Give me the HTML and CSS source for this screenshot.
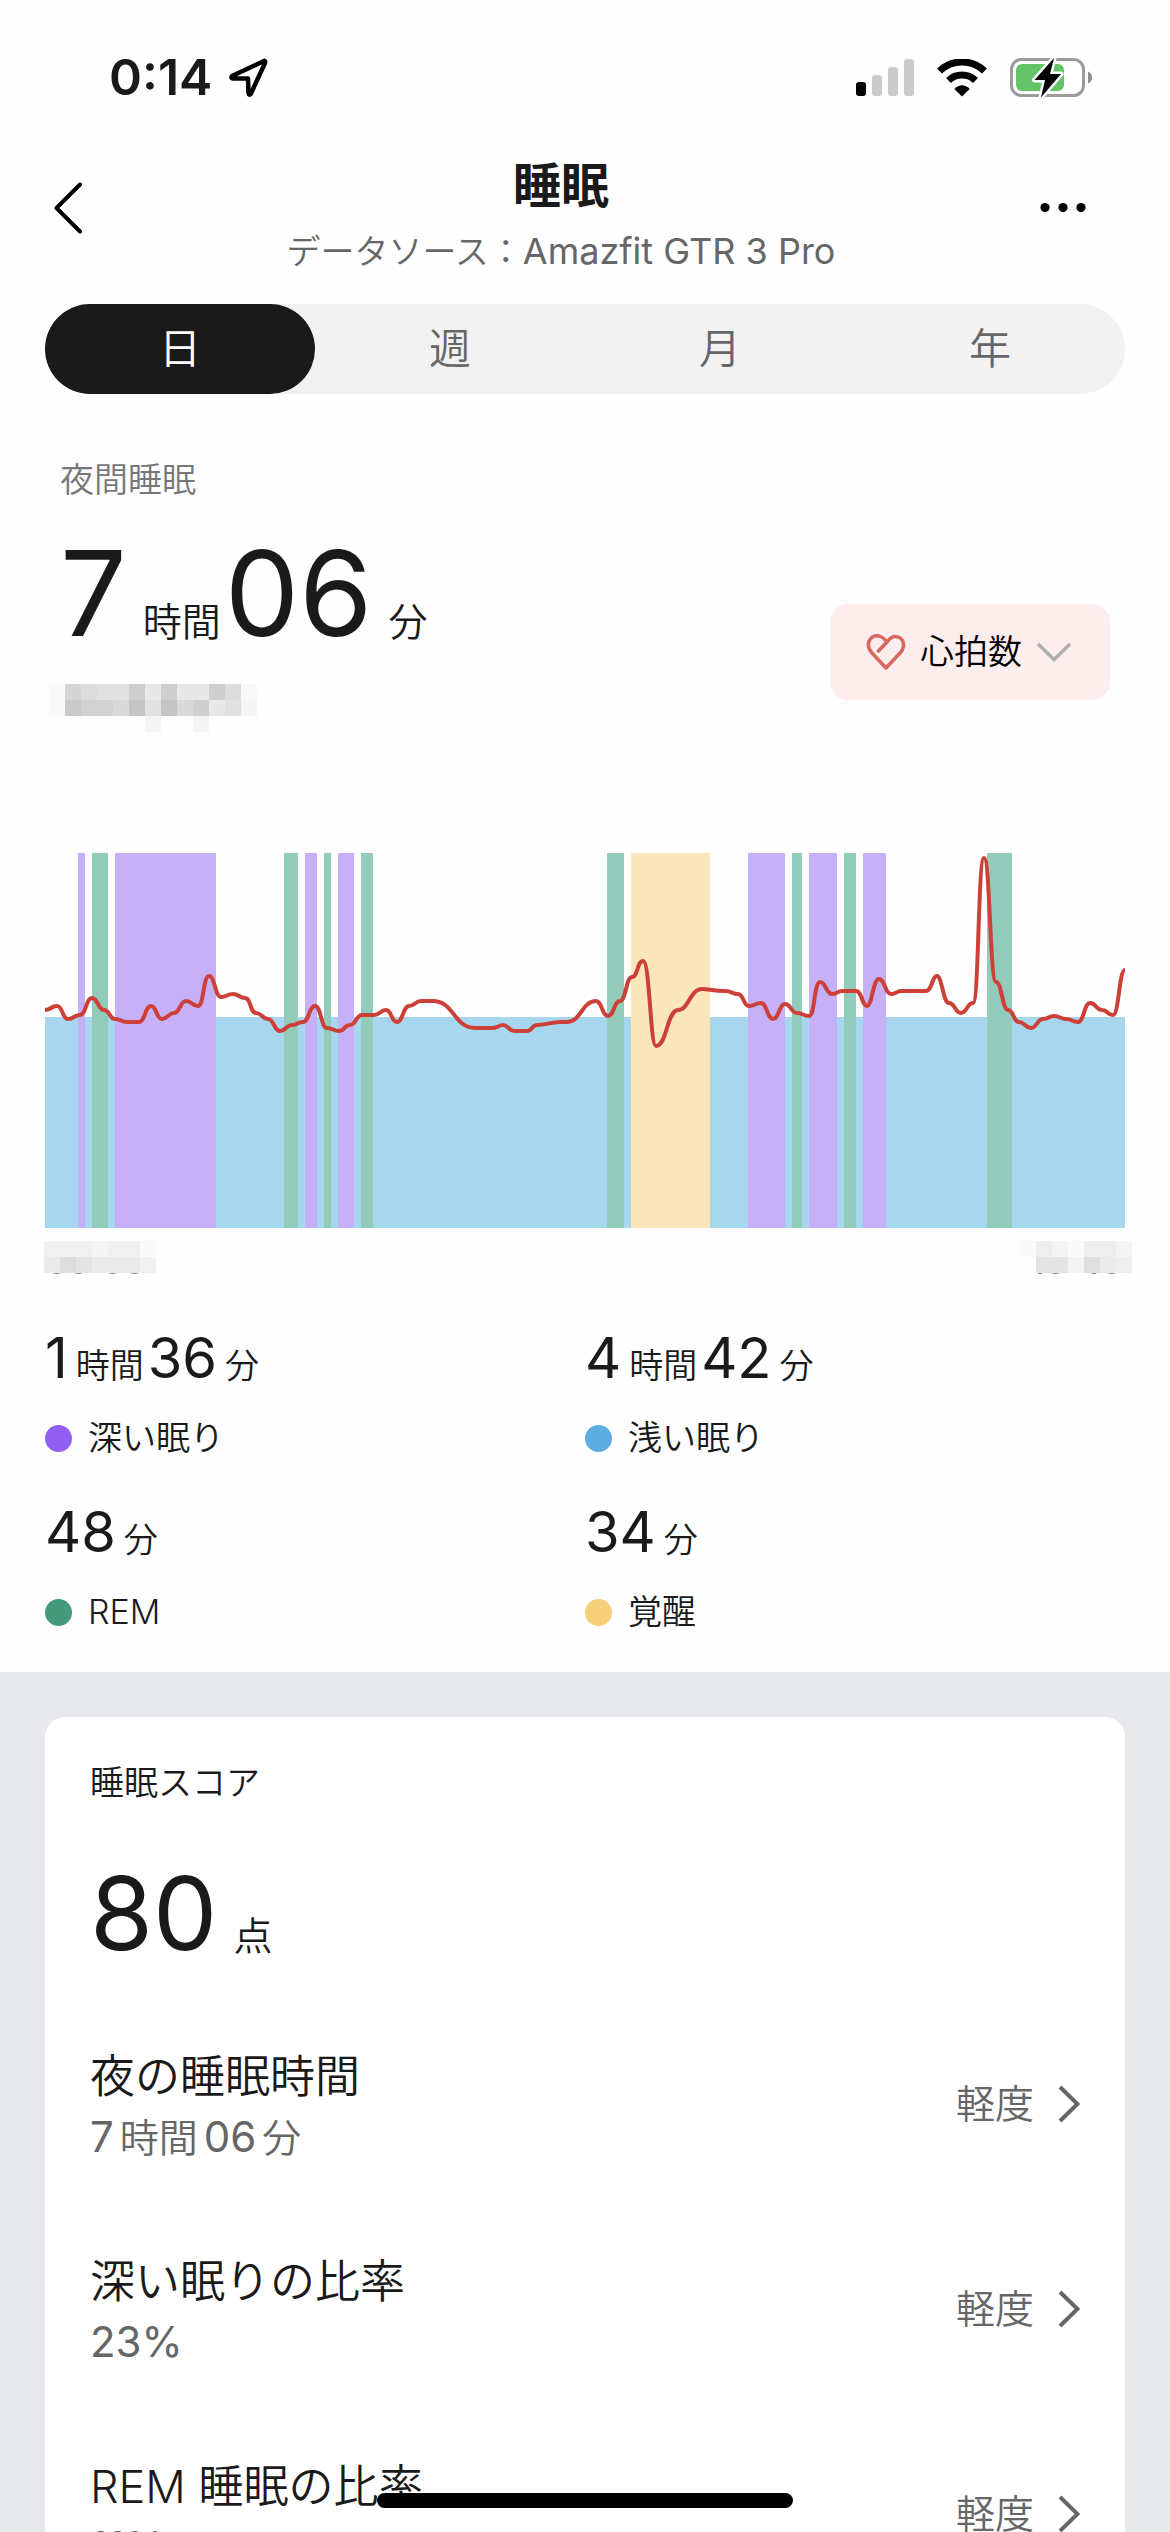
FILE: index.html
```html
<!DOCTYPE html>
<html lang="ja">
<head>
<meta charset="utf-8">
<meta name="viewport" content="width=device-width, initial-scale=1">
<title>睡眠</title>
<link rel="stylesheet" href="styles.css">
</head>
<body>
<div class="screen">
  <div class="status-bar">
    <div class="status-left">
      <span class="clock">0:14</span>
      <svg width="40" height="40" viewBox="0 0 40 40" aria-hidden="true">
        <path d="M36 3 L4 18 Q2.500 20 5 20.500 L20 20.500 L20.500 35 Q21 38 23 35.500 L37 5 Q37.500 2.500 36 3Z" fill="none" stroke="#000" stroke-width="4.500" stroke-linejoin="round"/>
      </svg>
    </div>
    <div class="status-right">
      <svg width="58" height="38" viewBox="0 0 58 38" aria-hidden="true">
        <rect x="0" y="23" width="10" height="14" rx="3" fill="#000"/>
        <rect x="16" y="16" width="10" height="21" rx="3" fill="#cacaca"/>
        <rect x="32" y="8" width="10" height="29" rx="3" fill="#cacaca"/>
        <rect x="48" y="0" width="10" height="37" rx="3" fill="#cacaca"/>
      </svg>
      <svg width="52" height="38" viewBox="0 0 52 38" aria-hidden="true">
        <path d="M3.500 12 A32.500 32.500 0 0 1 48.500 12" fill="none" stroke="#000" stroke-width="7"/>
        <path d="M12.500 21.500 A19.500 19.500 0 0 1 39.500 21.500" fill="none" stroke="#000" stroke-width="7"/>
        <path d="M26 37.500 L18.300 30 Q26 22.500 33.700 30 Z" fill="#000"/>
      </svg>
      <svg width="82" height="42" viewBox="0 0 82 42" aria-hidden="true">
        <rect x="1.500" y="2.500" width="72" height="36" rx="10" fill="#fff" stroke="#9b9b9b" stroke-width="3"/>
        <path d="M78 14.500 Q82 16 82 20.500 Q82 25 78 26.500Z" fill="#8c8c8c"/>
        <rect x="6" y="7" width="48" height="27" rx="6" fill="#62c466"/>
        <path d="M44 1 L24.500 23 H35 L31 40.500 L51 17 H40 Z" fill="#000" stroke="#fff" stroke-width="5" stroke-linejoin="round" paint-order="stroke"/>
      </svg>
    </div>
  </div>

  <header class="nav">
    <button class="nav-button" type="button" aria-label="戻る">
      <svg width="28" height="52" viewBox="0 0 28 52" aria-hidden="true"><path d="M26 2.500 L2.500 26 L26 49.500" fill="none" stroke="#000" stroke-width="4" stroke-linecap="round" stroke-linejoin="round"/></svg>
    </button>
    <div class="nav-title">
      <h1>睡眠</h1>
      <p><span class="kana">データソース：</span>Amazfit GTR 3 Pro</p>
    </div>
    <button class="nav-button" type="button" aria-label="その他">
      <svg width="46" height="10" viewBox="0 0 46 10" aria-hidden="true"><circle cx="5" cy="4.600" r="4.600"/><circle cx="23" cy="4.600" r="4.600"/><circle cx="41" cy="4.600" r="4.600"/></svg>
    </button>
  </header>

  <main>
    <div class="tabs" role="tablist">
      <button class="tab tab-active" role="tab" aria-selected="true" type="button">日</button>
      <button class="tab" role="tab" aria-selected="false" type="button">週</button>
      <button class="tab" role="tab" aria-selected="false" type="button">月</button>
      <button class="tab" role="tab" aria-selected="false" type="button">年</button>
    </div>

    <section class="summary">
      <div>
        <h2 class="summary-label">夜間睡眠</h2>
        <p class="duration"><span>7</span><span class="unit unit-wide">時間</span><span>06</span><span class="unit">分</span></p>
        <svg class="masked" width="208" height="48" viewBox="0 0 13 3" shape-rendering="crispEdges" aria-hidden="true">
          <path fill="#fafafa" d="M0 0h1v2h-1z"/><path fill="#d5d5d5" d="M1 0h1v1h-1z"/><path fill="#dcdcdc" d="M2 0h1v1h-1zM11 0h1v1h-1z"/><path fill="#e1e1e1" d="M3 0h2v1h-2zM11 1h1v1h-1zM6 1h1v1h-1z"/><path fill="#cfcfcf" d="M5 0h1v1h-1zM7 0h1v1h-1zM10 0h1v1h-1zM9 1h1v1h-1z"/><path fill="#e8e8e8" d="M6 0h1v1h-1zM8 0h2v1h-2zM10 1h1v1h-1z"/><path fill="#f8f8f8" d="M12 0h1v1h-1z"/><path fill="#cacaca" d="M1 1h1v1h-1z"/><path fill="#d2d2d2" d="M2 1h2v1h-2z"/><path fill="#d9d9d9" d="M4 1h1v1h-1zM8 1h1v1h-1z"/><path fill="#c5c5c5" d="M5 1h1v1h-1zM7 1h1v1h-1z"/><path fill="#f5f5f5" d="M12 1h1v1h-1zM6 2h1v1h-1zM9 2h1v1h-1z"/>
        </svg>
      </div>
      <label class="metric">
        <svg width="40" height="38" viewBox="0 0 40 38" aria-hidden="true"><path d="M12.500 18 L22 8 C28 -0.500 38.500 4.500 37.500 13 Q37 17 34 20 L20 35 L6 20 C-2.500 10 6 0 14.500 3.500 Q18 5 20 8" fill="none" stroke="#d9685f" stroke-width="3.500" stroke-linecap="round" stroke-linejoin="round"/></svg>
        <select aria-label="表示する指標"><option>心拍数</option></select>
        <svg width="36" height="20" viewBox="0 0 36 20" aria-hidden="true"><path d="M2 2 L18 17.500 L34 2" fill="none" stroke="#b0aeae" stroke-width="3.500"/></svg>
      </label>
    </section>

    <svg class="chart" viewBox="0 0 1080 375" role="img" aria-label="睡眠ステージと心拍数">
      <rect class="light" y="164" width="1080" height="211"/>
      <g class="deep">
        <rect x="33" width="7" height="375"/><rect x="70" width="101" height="375"/><rect x="260" width="12" height="375"/><rect x="293" width="16" height="375"/><rect x="703" width="37" height="375"/><rect x="764" width="28" height="375"/><rect x="818" width="23" height="375"/>
      </g>
      <g class="rem">
        <rect x="47" width="16" height="375"/><rect x="239" width="14" height="375"/><rect x="279" width="7" height="375"/><rect x="316" width="12" height="375"/><rect x="562" width="17" height="375"/><rect x="747" width="10" height="375"/><rect x="799" width="12" height="375"/><rect x="942" width="25" height="375"/>
      </g>
      <rect class="awake" x="586" width="79" height="375"/>
      <path class="heart-rate" d="M0 157 C6 157 6 153 12 153 S17 166 23 166 S29 162 35 162 S41 145 47 145 S53 157 59 157 S64 166 70 166 S76 169 82 169 H94 C100 169 100 153 106 153 S111 166 117 166 S123 160 129 160 S135 148 141 148 S147 153 153 153 S158 123 164 123 S170 144 176 144 S182 141 188 141 S194 145 200 145 S205 160 211 160 S217 166 223 166 S229 178 235 178 S241 172 247 172 S252 169 258 169 S264 153 270 153 S276 175 282 175 S288 178 294 178 S299 172 305 172 S311 162 317 162 H329 C335 162 335 157 341 157 S346 169 352 169 S358 153 364 153 S370 148 376 148 H388 C409 148 409 175 430 175 H447 C453 175 453 172 458 172 S464 178 469 178 H482 C487 178 487 172 492 172 C502 172 504 169 516 169 H522 C536 169 537 148 551 148 C557 148 557 163 563 163 S569 148 575 148 S581 124 587 124 S592 108 598 108 C605 108 605 193 611 193 C622 193 622 157 633 157 S645 136 657 136 C664 136 668 138 680 138 C687 138 687 141 693 141 S698 153 704 153 S710 150 716 150 S722 166 728 166 S734 151 740 151 S746 160 752 160 S758 163 764 163 S769 129 775 129 S781 141 787 141 S792 138 797 138 H811 C817 138 817 153 822 153 S828 126 834 126 S840 141 846 141 S851 138 856 138 H881 C887 138 887 123 892 123 S898 150 904 150 S910 160 916 160 S922 150 928 150 S933 5 939 5 S945 129 951 129 S957 157 963 157 S968 169 974 169 S980 175 986 175 S992 166 998 166 S1003 163 1009 163 S1015 166 1021 166 S1027 169 1033 169 S1039 150 1045 150 S1051 157 1057 157 S1062 162 1068 162 S1074 117 1080 117"/>
    </svg>

    <div class="axis">
      <svg width="112" height="36" viewBox="0 0 112 36" aria-hidden="true">
        <g shape-rendering="crispEdges"><path fill="#f0f0f0" d="M0 0h48v16h-48zM64 0h32v16h-32zM96 16h16v16h-16z"/><path fill="#f5f5f5" d="M48 0h16v16h-16z"/><path fill="#fafafa" d="M96 0h16v16h-16z"/><path fill="#eaeaea" d="M0 16h16v16h-16zM48 16h48v16h-48z"/><path fill="#ddd" d="M16 16h16v16h-16z"/><path fill="#e4e4e4" d="M32 16h16v16h-16z"/></g>
        <path d="M8 32h9q-4 2-9 0zM30 32h9q-4 2-9 0zM64 32h9q-4 2-9 0zM86 32h9q-4 2-9 0z" fill="#8a8a8a"/>
      </svg>
      <svg width="112" height="36" viewBox="0 0 112 36" aria-hidden="true">
        <g shape-rendering="crispEdges"><path fill="#fafafa" d="M0 0h16v16h-16zM48 0h16v16h-16z"/><path fill="#eee" d="M16 0h16v16h-16zM64 0h32v16h-32zM96 16h16v16h-16z"/><path fill="#f4f4f4" d="M32 0h16v16h-16zM96 0h16v16h-16zM48 16h16v16h-16z"/><path fill="#e4e4e4" d="M16 16h32v16h-32z"/><path fill="#dfdfdf" d="M64 16h16v16h-16z"/><path fill="#eaeaea" d="M80 16h16v16h-16z"/></g>
        <path d="M18 32h4v1h-4zM31 32h9q-4 2-9 0zM72 32h4v1h-4zM87 32h9q-4 2-9 0z" fill="#8a8a8a"/>
      </svg>
    </div>

    <dl class="stages">
      <div class="stage"><dt><i class="dot dot-deep"></i>深い眠り</dt><dd><span>1</span><small>時間</small><span>36</span><small>分</small></dd></div>
      <div class="stage"><dt><i class="dot dot-light"></i>浅い眠り</dt><dd><span>4</span><small>時間</small><span>42</span><small>分</small></dd></div>
      <div class="stage"><dt><i class="dot dot-rem"></i>REM</dt><dd><span>48</span><small>分</small></dd></div>
      <div class="stage"><dt><i class="dot dot-awake"></i>覚醒</dt><dd><span>34</span><small>分</small></dd></div>
    </dl>

    <div class="details">
      <section class="card">
        <h2 class="card-title">睡眠スコア</h2>
        <p class="score"><span>80</span><span class="unit">点</span></p>
        <ul class="factors">
          <li><a class="factor" href="#duration">
            <span class="factor-text"><span class="factor-name">夜の睡眠時間</span><span class="factor-value"><span>7</span><small>時間</small><span>06</span><small>分</small></span></span>
            <span class="factor-level">軽度<svg width="22" height="38" viewBox="0 0 22 38" aria-hidden="true"><path d="M2 2 L19.500 19 L2 36" fill="none" stroke="#666" stroke-width="4"/></svg></span>
          </a></li>
          <li><a class="factor" href="#deep">
            <span class="factor-text"><span class="factor-name">深い眠りの比率</span><span class="factor-value">23%</span></span>
            <span class="factor-level">軽度<svg width="22" height="38" viewBox="0 0 22 38" aria-hidden="true"><path d="M2 2 L19.500 19 L2 36" fill="none" stroke="#666" stroke-width="4"/></svg></span>
          </a></li>
          <li><a class="factor" href="#rem">
            <span class="factor-text"><span class="factor-name">REM 睡眠の比率</span><span class="factor-value">11%</span></span>
            <span class="factor-level">軽度<svg width="22" height="38" viewBox="0 0 22 38" aria-hidden="true"><path d="M2 2 L19.500 19 L2 36" fill="none" stroke="#666" stroke-width="4"/></svg></span>
          </a></li>
        </ul>
      </section>
    </div>
  </main>
  <div class="home-indicator"></div>
</div>
</body>
</html>
```
FILE: styles.css
```css
* { box-sizing: border-box; }

body, h1, h2, p, dl, dd, ul { margin: 0; padding: 0; }

body {
  background: #fefefe;
  color: #1a1a1a;
  font-family: Inter, "Noto Sans CJK JP", sans-serif;
  font-size: 34px;
  line-height: 40px;
  font-weight: 400;
}

h2 { font-size: 34px; font-weight: 350; }
svg { display: block; flex: none; }
small { font-size: 34px; line-height: 40px; font-weight: 350; }
ul { list-style: none; }

button {
  border: 0;
  padding: 0;
  background: none;
  font: inherit;
  color: inherit;
}

.screen {
  height: 100vh;
  display: flex;
  flex-direction: column;
  overflow: hidden;
}

.status-bar {
  display: flex;
  justify-content: space-between;
  align-items: center;
  padding: 47px 78px 0 109px;
}

.status-left, .status-right { display: flex; align-items: center; }
.status-left { gap: 16px; }
.status-right { gap: 22px; }
.clock { font-size: 50px; line-height: 61px; font-weight: 600; }

.nav {
  display: flex;
  justify-content: space-between;
  align-items: center;
  padding: 48px 84px 32px 54px;
}

.nav-button { padding-bottom: 12px; }
.nav-title { text-align: center; }
.nav-title h1 { font-size: 48px; line-height: 60px; font-weight: 700; }
.nav-title p { padding-top: 15px; font-size: 36px; color: #666; }
.kana { font-size: 34px; font-weight: 350; }

main {
  flex: 1;
  min-height: 0;
  overflow-y: auto;
  scrollbar-width: none;
}

.tabs {
  display: flex;
  margin: 0 45px;
  border-radius: 45px;
  background: #f2f2f2;
}

.tab {
  flex: 1;
  border-radius: 45px;
  font-size: 42px;
  line-height: 90px;
  font-weight: 350;
  color: #666;
}

.tab-active { background: #1a1a1a; color: #fff; }

.summary {
  display: flex;
  justify-content: space-between;
  align-items: flex-end;
  padding: 66px 60px 121px;
}

.summary-label { color: #777; }

.duration {
  display: flex;
  align-items: baseline;
  margin: 34px 0 32px;
  font-size: 118px;
  line-height: 118px;
}

.unit { margin-left: 16px; font-size: 39px; line-height: 40px; font-weight: 350; }
.unit-wide { margin-right: 4px; }
.masked { margin-left: -11px; }

.metric {
  display: flex;
  align-items: center;
  gap: 14px;
  height: 96px;
  margin-bottom: 32px;
  padding: 0 38px 0 36px;
  border-radius: 18px;
  background: #fdeeed;
}

.metric select {
  appearance: none;
  border: 0;
  padding: 0;
  background: none;
  font: inherit;
  font-weight: 350;
  color: #000;
}

.chart { width: calc(100% - 90px); margin: 0 45px; }
.light { fill: #a7d7ee; }
.deep { fill: #c6b0f7; }
.rem { fill: #93cbbb; }
.awake { fill: #fae6ba; }
.heart-rate { fill: none; stroke: #cc4038; stroke-width: 4; }

.axis {
  display: flex;
  justify-content: space-between;
  padding: 13px 38px 0 44px;
}

.stages {
  display: grid;
  grid-template-columns: 1fr 1fr;
  row-gap: 44px;
  padding: 51px 45px 40px;
}

.stage { display: flex; flex-direction: column-reverse; gap: 30px; }
.stage dt { display: flex; align-items: center; gap: 16px; font-weight: 350; }
.stage dd { display: flex; align-items: baseline; gap: 8px; font-size: 56px; line-height: 60px; }
.stage small { margin-right: -4px; }

.dot { width: 27px; height: 27px; border-radius: 50%; }
.dot-deep { background: #9160f3; }
.dot-light { background: #5caee0; }
.dot-rem { background: #459a7c; }
.dot-awake { background: #f6cf78; }

.details { padding: 45px 45px 0; background: #e8e9ed; }

.card {
  padding: 46px 45px;
  border-radius: 20px 20px 0 0;
  background: #fff;
}

.score {
  display: flex;
  align-items: baseline;
  margin: 59px 0 83px;
  font-size: 102px;
  line-height: 102px;
}

.factors { display: grid; row-gap: 85px; }

.factor {
  display: flex;
  justify-content: space-between;
  align-items: center;
  color: inherit;
  text-decoration: none;
}

.factor-text { display: grid; line-height: 60px; }
.factor-name { font-size: 45px; font-weight: 350; }
.factor-value { display: flex; align-items: baseline; gap: 6px; font-size: 42px; color: #666; }
.factor-value small { font-size: 39px; }

.factor-level {
  display: flex;
  align-items: center;
  gap: 24px;
  padding-bottom: 6px;
  font-size: 39px;
  font-weight: 350;
  color: #666;
}

.home-indicator {
  position: fixed;
  bottom: 24px;
  left: 50%;
  width: 416px;
  height: 15px;
  margin-left: -208px;
  border-radius: 8px;
  background: #000;
}
```
